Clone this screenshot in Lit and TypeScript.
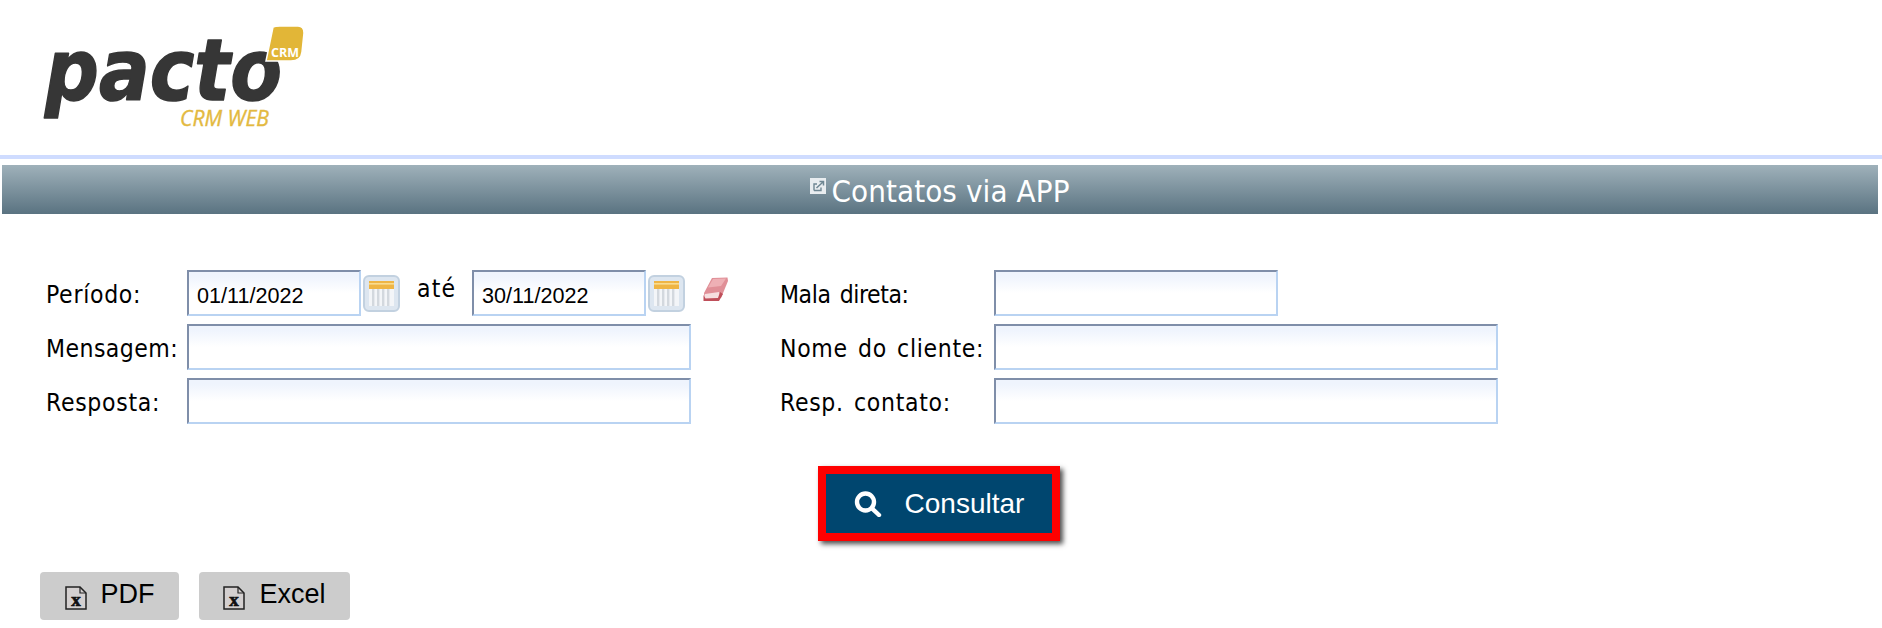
import { LitElement, html, css, svg } from "lit";
import { customElement } from "lit/decorators.js";

const calendar = html`<svg class="cal" width="37" height="37" viewBox="0 0 37 37">
  <rect x="1" y="1" width="35" height="35" rx="5" fill="#dde6f0" stroke="#c2d1e0" stroke-width="2"/>
  <rect x="6" y="14" width="25" height="17" fill="#f3f5f8"/>
  <rect x="6" y="6" width="25" height="8" fill="#efb544"/>
  <rect x="6" y="8" width="25" height="1.6" fill="#f9dc90"/>
  ${[9, 14, 19, 24].map((x) => svg`<rect x="${x}" y="14" width="2.4" height="17" fill="#d3d8de"/>`)}
</svg>`;

const eraser = html`<svg class="eraser" width="26" height="25" viewBox="0 0 26 25">
  <path d="M9 1 L24.5 0.5 L25 4 L18 21 L2 24 L1 16 Z" fill="#e08f97"/>
  <path d="M10 2 L23 1.5 L18 9 L5 10.5 Z" fill="#eeb0b5"/>
  <path d="M2 17 L16 15 L17.5 19 L15 21.5 L2 22 Z" fill="#f6dfe0"/>
  <path d="M0.5 18 L0.5 24 L16 24 L20 17 L17 15 L15 21 L2.5 21.5 Z" fill="#bf4f5a"/>
</svg>`;

const fileX = html`<svg class="file" width="22" height="24" viewBox="0 0 22 24">
  <path d="M1 1 H15 L21 7 V23 H1 Z" fill="#d4d0d0" stroke="#222" stroke-width="1.5"/>
  <path d="M15 1 V7 H21" fill="none" stroke="#222" stroke-width="1.2"/>
  <text x="11" y="20" text-anchor="middle" class="filex">x</text>
</svg>`;

@customElement("app-root")
export class AppRoot extends LitElement {
  static styles = css`
    :host {
      display: block;
      background: #fff;
      height: 628px;
      overflow: hidden;
    }
    .header {
      height: 155px;
      padding-left: 40px;
      display: flex;
      align-items: flex-start;
    }
    .logo {
      display: block;
      margin-top: 20px;
      overflow: visible;
    }
    .pacto {
      font-family: "DejaVu Sans", sans-serif;
      font-weight: 700;
      font-style: italic;
      font-size: 86px;
      fill: #363636;
      stroke: #363636;
      stroke-width: 1.6px;
      stroke-linejoin: round;
    }
    .crm {
      font-family: "Open Sans", sans-serif;
      font-weight: 700;
      font-size: 12px;
      fill: #fff;
    }
    .web {
      font-family: "Open Sans", sans-serif;
      font-style: italic;
      font-weight: 400;
      font-size: 22px;
      fill: #e3b93f;
      stroke: #e3b93f;
      stroke-width: 0.4px;
    }
    .rule {
      height: 4px;
      background: #cfdcff;
      margin-bottom: 6px;
    }
    .title {
      box-sizing: border-box;
      height: 49px;
      padding-top: 3px;
      margin: 0 4px 0 2px;
      background: linear-gradient(#9fb1ba, #5a7381);
      display: flex;
      justify-content: center;
      align-items: center;
      gap: 5px;
      color: #fff;
      font: 400 31px "DejaVu Sans", sans-serif;
      font-stretch: condensed;
      letter-spacing: 0.1px;
    }
    .title svg {
      margin-top: -10px;
    }
    .form {
      display: grid;
      grid-template-columns: 141px 504px 89px 214px 504px;
      grid-auto-rows: 46px;
      row-gap: 8px;
      padding: 56px 0 0 46px;
      color: #000;
      font: 400 24.5px "DejaVu Sans", sans-serif;
      font-stretch: condensed;
      letter-spacing: 0.7px;
      word-spacing: 2.5px;
    }
    .form label {
      align-self: center;
      padding-top: 2px;
      white-space: nowrap;
    }
    .form label.tight {
      letter-spacing: -0.4px;
    }
    .form label.mid {
      letter-spacing: 0.45px;
    }
    .spacer {
      display: block;
    }
    .field {
      box-sizing: border-box;
      height: 46px;
      display: flex;
      align-items: center;
      border: 2px solid;
      border-color: #7f8ea9 #b9d3f2 #b9d3f2 #7f8ea9;
      background: linear-gradient(#eff4fd 10%, #fff 50%);
      padding: 5px 0 0 8px;
      font: 400 21.6px "Liberation Sans", Arial, sans-serif;
      letter-spacing: 0;
      color: #000;
      flex: none;
    }
    .date { width: 174px; }
    .full { width: 100%; }
    .mala { width: 284px; }
    .period {
      display: flex;
      align-items: flex-start;
      min-width: 0;
    }
    .cal {
      margin: 5px 0 0 2px;
      flex: none;
    }
    .ate {
      flex: none;
      width: 72px;
      padding-left: 17px;
      box-sizing: border-box;
      margin-top: -4px;
      line-height: 46px;
      letter-spacing: 1.2px;
    }
    .eraser {
      margin: 7px 0 0 18px;
      flex: none;
    }
    .submit-row {
      display: flex;
      justify-content: center;
      padding: 42px 4px 31px 0;
    }
    .submit {
      box-sizing: border-box;
      width: 242px;
      height: 75px;
      border: 8px solid #ff0000;
      background: #00466f;
      box-shadow: 3px 3px 5px rgba(0, 0, 0, 0.7);
      display: flex;
      align-items: center;
      justify-content: center;
      gap: 23px;
      color: #fff;
      font: 400 28px "Liberation Sans", Arial, sans-serif;
    }
    .exports {
      display: flex;
      gap: 20px;
      padding-left: 40px;
    }
    .exp {
      box-sizing: border-box;
      height: 48px;
      background: #cccccc;
      border-radius: 4px;
      display: flex;
      align-items: center;
      justify-content: center;
      gap: 14px;
      color: #000;
      font: 400 27px "Liberation Sans", Arial, sans-serif;
    }
    .exp.pdf { width: 139px; }
    .exp.xls { width: 151px; }
    .exp span { margin-top: -3px; }
    .file { margin-top: 3px; }
    .filex {
      font: 700 19px "Liberation Serif", serif;
      fill: #111;
      stroke: #111;
      stroke-width: 0.7px;
    }
  `;

  render() {
    return html`
      <div class="header">
        <svg class="logo" width="280" height="115" viewBox="0 0 280 115">
          <text class="pacto" x="5" y="80" textLength="237" lengthAdjust="spacingAndGlyphs">pacto</text>
          <path d="M233 7 Q235 6 240 6 H258 Q264 6 264 13 L262 32 Q261 41 251 41 H226 Z" fill="#e2b637" stroke="#fff" stroke-width="1.5"/>
          <text class="crm" x="231" y="37" textLength="28" lengthAdjust="spacingAndGlyphs">CRM</text>
          <text class="web" x="140" y="106" textLength="89" lengthAdjust="spacingAndGlyphs">CRM WEB</text>
        </svg>
      </div>
      <div class="rule"></div>
      <div class="title">
        <svg width="16" height="16" viewBox="0 0 16 16">
          <rect width="16" height="16" fill="#e9edf0"/>
          <path d="M4 12.5 V6 H7 M4 12.5 H11 V9.5" fill="none" stroke="#6f8793" stroke-width="1.4"/>
          <path d="M6.5 10 L13 4 M9.5 3.5 H13.5 V7.5" fill="none" stroke="#6f8793" stroke-width="1.5"/>
        </svg>
        <span>Contatos via APP</span>
      </div>
      <div class="form">
        <label>Período:</label>
        <div class="period">
          <div class="field date">01/11/2022</div>
          ${calendar}
          <span class="ate">até</span>
          <div class="field date">30/11/2022</div>
          ${calendar}
          ${eraser}
        </div>
        <span class="spacer"></span>
        <label class="tight">Mala direta:</label>
        <div class="field mala"></div>

        <label class="mid">Mensagem:</label>
        <div class="field full"></div>
        <span class="spacer"></span>
        <label>Nome do cliente:</label>
        <div class="field full"></div>

        <label>Resposta:</label>
        <div class="field full"></div>
        <span class="spacer"></span>
        <label>Resp. contato:</label>
        <div class="field full"></div>
      </div>
      <div class="submit-row">
        <div class="submit">
          <svg width="28" height="26" viewBox="0 0 28 26">
            <circle cx="11.5" cy="11" r="8.5" fill="none" stroke="#fff" stroke-width="4.4"/>
            <path d="M18 17.5 L25 24" fill="none" stroke="#fff" stroke-width="4.4" stroke-linecap="round"/>
          </svg>
          <span>Consultar</span>
        </div>
      </div>
      <div class="exports">
        <div class="exp pdf">${fileX}<span>PDF</span></div>
        <div class="exp xls">${fileX}<span>Excel</span></div>
      </div>
    `;
  }
}
